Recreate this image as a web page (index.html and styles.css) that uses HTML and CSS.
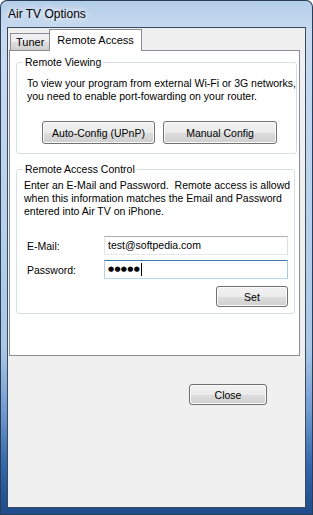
FILE: index.html
```html
<!DOCTYPE html>
<html>

<head>
  <title>Air TV Options</title>
  <link rel="stylesheet" href="styles.css">
</head>

<body>
  <div class="window">
    <div class="titlebar">Air TV Options</div>
    <div class="client">
      <div class="tabstrip">
        <div class="tab">Tuner</div>
        <div class="tab tab-active">Remote Access</div>
      </div>
      <div class="tabpanel">
        <fieldset class="group group-viewing">
          <legend>Remote Viewing</legend>
          <p class="group-text">To view your program from external Wi-Fi or 3G networks,<br>you need to enable port-fowarding on your router.</p>
          <div class="config-btns">
            <button class="btn btn-auto">Auto-Config (UPnP)</button>
            <button class="btn btn-manual">Manual Config</button>
          </div>
        </fieldset>
        <fieldset class="group group-access">
          <legend>Remote Access Control</legend>
          <p class="group-text">Enter an E-Mail and Password.&nbsp; Remote access is allowd<br>when this information matches the Email and Password<br>entered into Air TV on iPhone.</p>
          <div class="field-row">
            <span class="field-label">E-Mail:</span>
            <div class="textbox">test@softpedia.com</div>
          </div>
          <div class="field-row">
            <span class="field-label">Password:</span>
            <div class="textbox textbox-focus"><span class="dots">●●●●●</span><span class="caret"></span></div>
          </div>
          <div class="set-row">
            <button class="btn btn-set">Set</button>
          </div>
        </fieldset>
      </div>
      <div class="footer">
        <button class="btn btn-close">Close</button>
      </div>
    </div>
  </div>
</body>

</html>
```

FILE: styles.css
```css
body {
  margin: 0;
  font-family: "Liberation Sans", Arial, sans-serif;
  font-size: 10.5px;
  color: black;
}

.window {
  width: 313px;
  height: 515px;
  box-sizing: border-box;
  padding: 0 7px 7px 7px;
  border-radius: 7px 7px 0 0;
  background: linear-gradient(180deg, #b4cde8 0%, #c8dbf0 6%, #bcd3ec 35%, #a9c6e7 68%, #6f9ad0 80%, #3567aa 90%, #1d4a8a 100%);
  box-shadow: inset 0 0 0 1px #2a3d58;
}

.titlebar {
  height: 27px;
  line-height: 28px;
  padding-left: 1px;
  font-size: 12px;
  text-shadow: 0 0 6px #ffffff, 0 0 10px #ffffff;
}

.client {
  height: 481px;
  box-sizing: border-box;
  border: 1px solid #3a4a5e;
  background-color: #f0f0f0;
}

.tabstrip {
  height: 22px;
  display: flex;
  align-items: flex-end;
  padding-left: 2px;
  font-size: 11px;
}

.tab {
  height: 16px;
  line-height: 16px;
  padding: 0 5px;
  border: 1px solid #898c95;
  border-bottom: none;
  background: linear-gradient(180deg, #f2f2f2 0%, #ebebeb 50%, #dddddd 51%, #cfcfcf 100%);
}

.tab-active {
  position: relative;
  z-index: 1;
  height: 21px;
  line-height: 20px;
  margin-left: -1px;
  margin-bottom: -1px;
  padding: 0 7px;
  background: white;
}

.tabpanel {
  width: 291px;
  height: 306px;
  box-sizing: border-box;
  margin-left: 1px;
  border: 1px solid #898c95;
  background-color: white;
  padding: 0 4px 0 6px;
}

.group {
  margin: 0;
  padding: 0;
  border: 1px solid #d5dfe5;
  border-radius: 3px;
  white-space: nowrap;
}

.group legend {
  margin-left: 6px;
  padding: 0 2px;
  line-height: 13px;
}

.group-viewing {
  margin-top: 5px;
  padding-bottom: 9px;
}

.group-access {
  margin-top: 9px;
  padding-bottom: 6px;
}

.group-text {
  margin: 0;
  line-height: 13px;
}

.group-viewing .group-text {
  margin: 8px 0 0 10px;
}

.group-access .group-text {
  margin: 3px 0 0 7px;
}

.config-btns {
  display: flex;
  gap: 8px;
  margin: 18px 0 0 25px;
}

.btn {
  font-family: "Liberation Sans", Arial, sans-serif;
  font-size: 10.5px;
  color: black;
  padding: 0;
  border: 1px solid #707070;
  border-radius: 3px;
  background: linear-gradient(180deg, #f2f2f2 0%, #ebebeb 50%, #dddddd 51%, #cfcfcf 100%);
  box-shadow: inset 0 0 0 1px #fbfbfb;
}

.btn-auto {
  width: 113px;
  height: 23px;
}

.btn-manual {
  width: 114px;
  height: 23px;
}

.field-row {
  display: flex;
  align-items: center;
  margin-left: 10px;
}

.field-row + .field-row {
  margin-top: 5px;
}

.group-access .group-text + .field-row {
  margin-top: 18px;
}

.field-label {
  width: 77px;
}

.textbox {
  width: 184px;
  height: 19px;
  box-sizing: border-box;
  line-height: 17px;
  padding-left: 3px;
  border: 1px solid #abadb3;
  border-color: #abadb3 #dbdfe6 #e3e9ef #e2e3ea;
  display: flex;
  align-items: center;
}

.textbox-focus {
  border-color: #3d7bad #a4c9e3 #b7d9ed #b5cfe7;
}

.dots {
  font-family: "DejaVu Sans", sans-serif;
  font-size: 7px;
  letter-spacing: 0.3px;
}

.caret {
  width: 1px;
  height: 13px;
  margin-left: 1px;
  background-color: black;
}

.set-row {
  display: flex;
  justify-content: flex-end;
  margin: 7px 6px 0 0;
}

.btn-set {
  width: 72px;
  height: 21px;
}

.footer {
  padding: 28px 0 0 181px;
}

.btn-close {
  width: 78px;
  height: 21px;
}
```
